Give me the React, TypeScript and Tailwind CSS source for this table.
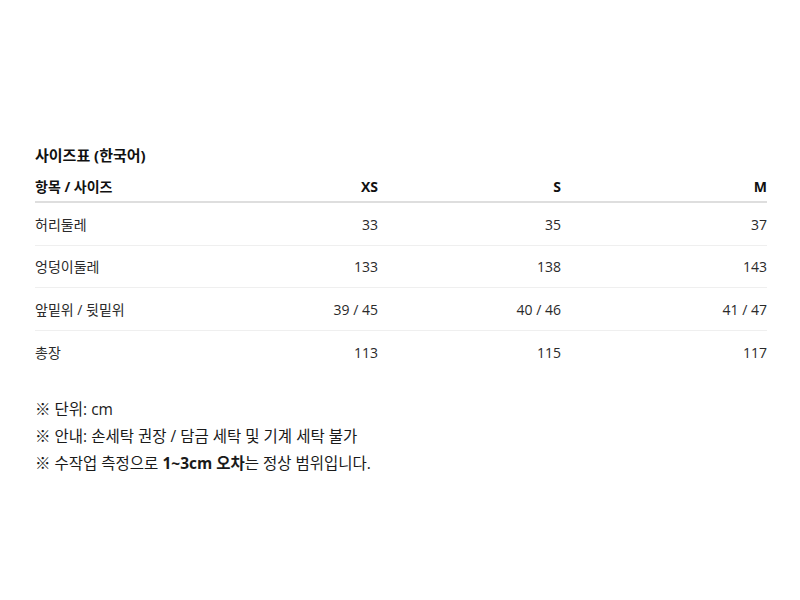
import React from "react";

const rows = [
  { label: "허리둘레", v: ["33", "35", "37"], h: "h-[43px]" },
  { label: "엉덩이둘레", v: ["133", "138", "143"], h: "h-[42px]" },
  { label: "앞밑위 / 뒷밑위", v: ["39 / 45", "40 / 46", "41 / 47"], h: "h-[43px]" },
  { label: "총장", v: ["113", "115", "117"], h: "h-[43px]" },
];

const font = { fontFamily: '"Open Sans", "Noto Sans CJK KR", sans-serif' };

export default function App() {
  return (
    <div className="w-[800px] h-[600px] bg-white text-[#222]" style={font}>
      <div className="px-[35px] pt-[143px] w-[802px]">
        <h2 className="text-[15px] font-bold leading-[24px] text-[#111] m-0">사이즈표 (한국어)</h2>
        <div className="mt-[4px]">
          <div className="grid grid-cols-[163px_180px_183px_206px] h-[32px] items-center border-b-2 border-[#dedede] text-[14px] font-bold text-[#111]">
            <div>항목 / 사이즈</div>
            <div className="text-right">XS</div>
            <div className="text-right">S</div>
            <div className="text-right">M</div>
          </div>
          {rows.map((r, i) => (
            <div
              key={r.label}
              className={
                "grid grid-cols-[163px_180px_183px_206px] items-center text-[14px] text-[#2a2a2a] " +
                r.h +
                " " +
                (i < rows.length - 1 ? "border-b border-[#efefef]" : "")
              }
            >
              <div>{r.label}</div>
              {r.v.map((x, j) => (
                <div key={j} className="text-right">{x}</div>
              ))}
            </div>
          ))}
        </div>
        <div className="mt-[22px] text-[15.5px] leading-[27px] text-[#1a1a1a]">
          <div>※ 단위: cm</div>
          <div>※ 안내: 손세탁 권장 / 담금 세탁 및 기계 세탁 불가</div>
          <div>
            ※ 수작업 측정으로 <span className="font-bold">1~3cm 오차</span>는 정상 범위입니다.
          </div>
        </div>
      </div>
    </div>
  );
}
